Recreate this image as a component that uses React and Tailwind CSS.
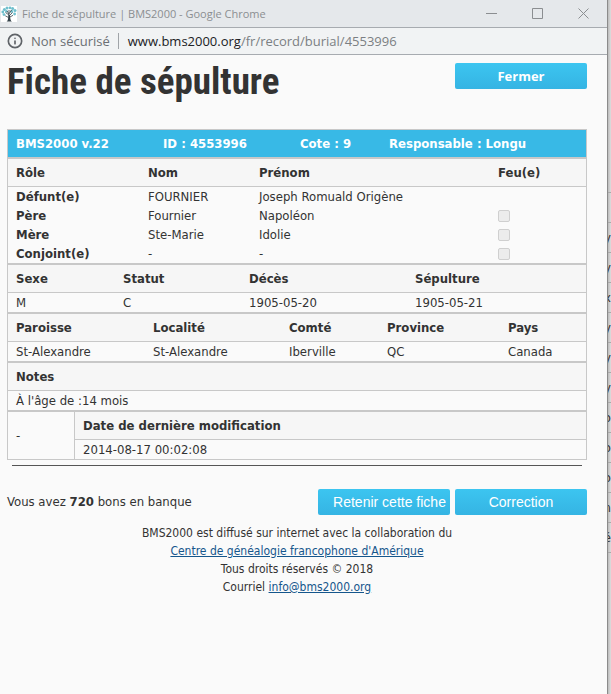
import { Info } from 'lucide-react';

const BACKDROP_ROWS = ['', 'y', 'y', 'x', 'y', 'y', 'y', 'o', 'o', 'o', 'n', 'é'];

const ROLES = [
  { role: 'Défunt(e)', nom: 'FOURNIER', prenom: 'Joseph Romuald Origène' },
  { role: 'Père', nom: 'Fournier', prenom: 'Napoléon', feu: true },
  { role: 'Mère', nom: 'Ste-Marie', prenom: 'Idolie', feu: true },
  { role: 'Conjoint(e)', nom: '-', prenom: '-', feu: true },
];

const TABLE = 'w-full table-fixed border-separate border-spacing-0 border border-[#c8c8c8] text-left';
const TH = 'h-7 border-b border-[#c8c8c8] bg-[#f6f6f6] px-2 py-0 font-bold';
const TD = 'h-[19px] px-2 py-0 whitespace-nowrap';
const BUTTON = 'h-[26px] w-[132px] rounded-xs bg-linear-to-b from-[#3cc5f0] to-[#35b4e3] text-white whitespace-nowrap';

function TreeIcon() {
  return (
    <svg viewBox="0 0 16 16" className="size-4 bg-white" aria-hidden="true">
      <g fill="#6fbfcd">
        <circle cx="1.8" cy="6" r="1.4" />
        <circle cx="3.4" cy="3.4" r="1.5" />
        <circle cx="6" cy="2" r="1.5" />
        <circle cx="9" cy="1.8" r="1.4" />
        <circle cx="11.6" cy="2.6" r="1.5" />
        <circle cx="14" cy="4.6" r="1.5" />
        <circle cx="13.6" cy="8" r="1.4" />
        <circle cx="3" cy="8.6" r="1.4" />
        <circle cx="5.4" cy="5.2" r="1.3" />
        <circle cx="10.8" cy="5.4" r="1.3" />
      </g>
      <path d="M8 9L4.5 6.5M8 10l3.5-3.5M8 9V4M8 8L6 5M8.4 7.5L10.5 4M7.5 11.5L4.3 9.8M9 11l3-1.7" stroke="#34424a" strokeWidth="0.8" fill="none" />
      <path d="M5.5 15.5Q7.3 15.2 7.3 9H9Q9.2 15.2 11 15.5z" fill="#34424a" />
    </svg>
  );
}

function WindowIcon({ d }) {
  return (
    <svg viewBox="0 0 11 11" className="size-[11px]" fill="none" stroke="currentColor" strokeWidth="1" aria-hidden="true">
      <path d={d} />
    </svg>
  );
}

function Section({ columns }) {
  return (
    <table className={TABLE}>
      <colgroup>
        {columns.map(c => <col key={c.label} className={c.width} />)}
      </colgroup>
      <thead>
        <tr>
          {columns.map(c => <th key={c.label} className={TH}>{c.label}</th>)}
        </tr>
      </thead>
      <tbody>
        <tr>
          {columns.map(c => <td key={c.label} className={TD}>{c.value}</td>)}
        </tr>
      </tbody>
    </table>
  );
}

function Record() {
  return (
    <div>
      <table className={TABLE}>
        <colgroup>
          <col className="w-[147px]" />
          <col className="w-[137px]" />
          <col className="w-[89px]" />
          <col />
        </colgroup>
        <tbody>
          <tr className="bg-[#38b9e6] text-white">
            <th className="h-[27px] px-2 py-0">BMS2000 v.22</th>
            <th className="px-2 py-0">ID : 4553996</th>
            <th className="px-2 py-0">Cote : 9</th>
            <th className="px-2 py-0">Responsable : Longu</th>
          </tr>
        </tbody>
      </table>

      <table className={TABLE}>
        <colgroup>
          <col className="w-[132px]" />
          <col className="w-[111px]" />
          <col />
          <col className="w-[96px]" />
        </colgroup>
        <thead>
          <tr>
            <th className={TH}>Rôle</th>
            <th className={TH}>Nom</th>
            <th className={TH}>Prénom</th>
            <th className={TH}>Feu(e)</th>
          </tr>
        </thead>
        <tbody>
          {ROLES.map(r => (
            <tr key={r.role}>
              <th className="h-[19px] px-2 py-0">{r.role}</th>
              <td className={TD}>{r.nom}</td>
              <td className={TD}>{r.prenom}</td>
              <td className={TD}>
                {r.feu && (
                  <input
                    type="checkbox"
                    disabled
                    aria-label={`Feu(e) ${r.role}`}
                    className="block size-3 appearance-none rounded-xs border border-[#cfcfcf] bg-[#ececec]"
                  />
                )}
              </td>
            </tr>
          ))}
        </tbody>
      </table>

      <Section
        columns={[
          { label: 'Sexe', value: 'M', width: 'w-[107px]' },
          { label: 'Statut', value: 'C', width: 'w-[126px]' },
          { label: 'Décès', value: '1905-05-20', width: 'w-[166px]' },
          { label: 'Sépulture', value: '1905-05-21' },
        ]}
      />
      <Section
        columns={[
          { label: 'Paroisse', value: 'St-Alexandre', width: 'w-[137px]' },
          { label: 'Localité', value: 'St-Alexandre', width: 'w-[136px]' },
          { label: 'Comté', value: 'Iberville', width: 'w-[98px]' },
          { label: 'Province', value: 'QC', width: 'w-[121px]' },
          { label: 'Pays', value: 'Canada' },
        ]}
      />
      <Section columns={[{ label: 'Notes', value: "À l'âge de :14 mois" }]} />

      <table className={TABLE}>
        <colgroup>
          <col className="w-[67px]" />
          <col />
        </colgroup>
        <tbody>
          <tr>
            <td rowSpan={2} className="border-r border-[#c8c8c8] px-2 py-0">-</td>
            <th className={TH}>Date de dernière modification</th>
          </tr>
          <tr>
            <td className={TD}>2014-08-17 00:02:08</td>
          </tr>
        </tbody>
      </table>
    </div>
  );
}

// Sliver of the window that sits behind this one
function Backdrop() {
  return (
    <div className="w-[3px] shrink-0 overflow-hidden bg-linear-to-r from-[#bcbcbc] to-[#dedede] pt-48" aria-hidden="true">
      {BACKDROP_ROWS.map((letter, i) => (
        <div key={i} className="flex h-[30px] items-center justify-end border-t border-[#a9a9a9]">
          {letter}
        </div>
      ))}
      <div className="border-t border-[#a9a9a9]" />
    </div>
  );
}

export default function App() {
  return (
    <div className="flex min-h-screen bg-[#fafafa] font-['DejaVu_Sans_Condensed','DejaVu_Sans',sans-serif] text-[13px] leading-[18px] text-[#333]">
      <div className="min-w-0 flex-1 border-r border-[#8b8b8b]">
        <header className="font-['Open_Sans',sans-serif]">
          <div className="flex h-7 items-center border-b border-[#a7abb0] bg-[#e5e8eb] pl-px text-[#8b8e91]">
            <TreeIcon />
            <span className="ml-[5px] flex-1 text-[11px]">Fiche de sépulture | BMS2000 - Google Chrome</span>
            <div className="flex gap-[35px] pr-[18px]">
              <button type="button" aria-label="Réduire"><WindowIcon d="M0 5.5h11" /></button>
              <button type="button" aria-label="Agrandir"><WindowIcon d="M.5.5h10v10H.5z" /></button>
              <button type="button" aria-label="Fermer la fenêtre"><WindowIcon d="M.5.5l10 10M10.5.5l-10 10" /></button>
            </div>
          </div>
          <div className="flex h-[27px] items-center border-b border-[#a7abb0] bg-[#f1f3f4] pl-[7px] text-[#7b7f83]">
            <Info size={16} strokeWidth={2.5} className="text-[#5f6368]" />
            <span className="ml-2 text-[#6b6f73]">Non sécurisé</span>
            <span className="mr-[9px] ml-2 h-4 border-l border-[#a0a4a8]" />
            <span><span className="text-[#202124]">www.bms2000.org</span>/fr/record/burial/4553996</span>
          </div>
        </header>

        <main className="pr-5 pl-[7px]">
          <div className="flex items-start justify-between pt-2 pb-10">
            <h1 className="h-[26px] font-['Roboto_Condensed','Open_Sans_Condensed',sans-serif] text-[37px] leading-[38px] font-bold whitespace-nowrap">
              Fiche de sépulture
            </h1>
            <button type="button" className={`${BUTTON} font-['Open_Sans',sans-serif] text-[13px] font-bold`}>Fermer</button>
          </div>

          <Record />
          <hr className="mx-[5px] mt-[5px] border-[#555]" />

          <div className="mt-[23px] flex items-center gap-[5px]">
            <p className="flex-1">Vous avez <b>720</b> bons en banque</p>
            <button type="button" className={`${BUTTON} pl-[11px] font-['Liberation_Sans',sans-serif] text-[14px]`}>Retenir cette fiche</button>
            <button type="button" className={`${BUTTON} font-['Liberation_Sans',sans-serif] text-[14px]`}>Correction</button>
          </div>

          <footer className="mt-[9px] text-center text-[12px]">
            <p>BMS2000 est diffusé sur internet avec la collaboration du</p>
            <p><a href="#centre" className="text-[#15568c] underline">Centre de généalogie francophone d'Amérique</a></p>
            <p>Tous droits réservés © 2018</p>
            <p>Courriel <a href="mailto:info@bms2000.org" className="text-[#15568c] underline">info@bms2000.org</a></p>
          </footer>
        </main>
      </div>
      <Backdrop />
    </div>
  );
}
